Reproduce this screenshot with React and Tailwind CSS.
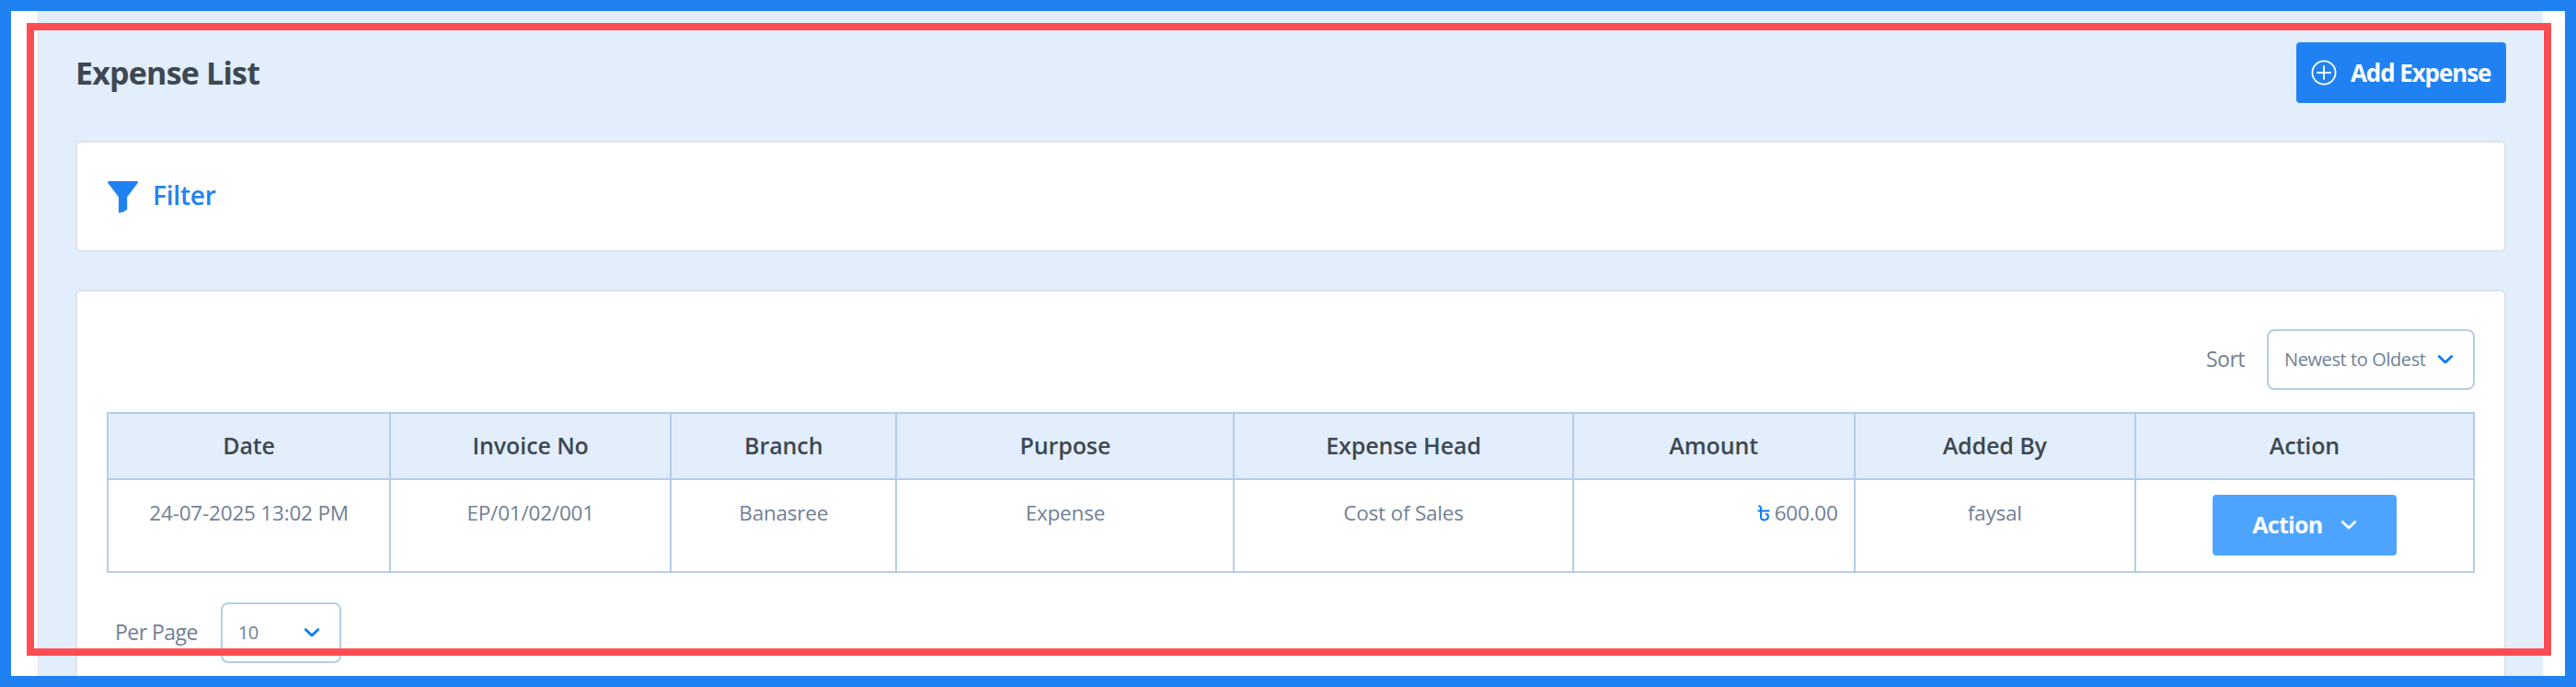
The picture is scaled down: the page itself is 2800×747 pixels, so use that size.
const columns = [
  { label: "Date", value: "24-07-2025 13:02 PM", width: "w-[307px]" },
  { label: "Invoice No", value: "EP/01/02/001", width: "w-[305px]" },
  { label: "Branch", value: "Banasree", width: "w-[245px]" },
  { label: "Purpose", value: "Expense", width: "w-[367px]" },
  { label: "Expense Head", value: "Cost of Sales", width: "w-[368px]" },
  { label: "Amount", value: "600.00", width: "w-[306px]" },
  { label: "Added By", value: "faysal", width: "w-[305px]" },
  { label: "Action", value: "", width: "w-[368px]" },
];

function Chevron({ className }) {
  return (
    <svg viewBox="0 0 18 12" className={`w-[18px] h-3 shrink-0 ${className}`} fill="none">
      <path d="M2.2 2.5 L9 9 L15.8 2.5" stroke="currentColor" strokeWidth="2.8" strokeLinecap="round" strokeLinejoin="round" />
    </svg>
  );
}

function Funnel() {
  return (
    <svg viewBox="0 0 33 35" className="w-[33px] h-[35px] mt-px shrink-0" fill="currentColor">
      <path d="M0.3 0 H32.7 V2 L21.2 17.2 V30.8 L17 33.6 L12 34.6 V17.2 L0.3 2 Z" />
    </svg>
  );
}

function Taka() {
  return (
    <svg viewBox="0 0 14 18" className="w-3.5 h-[18px] shrink-0 text-[#0b7bf8]" fill="none">
      <path
        d="M1.4 1.4 C3.2 1.2 4 2.2 4 4 V13 C4 15.4 5.2 16.4 7.4 16.4 C10.4 16.4 11.9 14.6 11.9 12.2 C11.9 10.4 10.8 9.8 9 9.9 M0.6 6.6 H13.4"
        stroke="currentColor"
        strokeWidth="2"
      />
    </svg>
  );
}

function Header() {
  return (
    <div className="flex items-start justify-between pt-[34px] h-[141px]">
      <h1 className="text-[34px] leading-[66px] font-bold tracking-[-0.8px] text-[#3d4852]">Expense List</h1>
      <button className="flex items-center w-[228px] h-[66px] pl-4 gap-[15px] rounded bg-[#2082f2] text-white text-[26px] font-bold tracking-[-1.1px] whitespace-nowrap">
        <svg viewBox="0 0 28 28" className="w-7 h-7 shrink-0" fill="none" stroke="currentColor" strokeWidth="1.8">
          <circle cx="14" cy="14" r="12.6" />
          <path d="M14 6.2 V21.8 M6.2 14 H21.8" />
        </svg>
        Add Expense
      </button>
    </div>
  );
}

function App() {
  return (
    <div className="relative w-[2800px] h-[747px] overflow-hidden border-12 border-[#2082f2] bg-white font-['Open_Sans',sans-serif] text-[#718096]">
      <div className="ml-[29px] w-[2723px] h-[723px] overflow-hidden border-l border-[#e5e5e5] bg-[#e2eefc] px-10">
        <Header />

        {/* Filter */}
        <div className="flex items-center h-[121px] pl-[33px] rounded-md border-2 border-[#dfe2e6] bg-white text-[#2082f2]">
          <Funnel />
          <span className="ml-4 -mt-[3px] text-[28px] font-semibold tracking-[-0.2px]">Filter</span>
        </div>

        {/* Expense table */}
        <div className="mt-[41px] h-[480px] pl-8 pt-[41px] rounded-md border-2 border-[#dfe2e6] bg-white">
          <div className="flex items-center justify-end gap-6 w-[2574px] h-[66px] text-[23px]">
            <span className="-mt-0.5 tracking-[-0.5px]">Sort</span>
            <div className="flex items-center justify-between w-[226px] h-[66px] pl-[17px] pr-[21px] rounded-lg border-2 border-[#b5cce7] text-[20px] tracking-[-0.4px] whitespace-nowrap">
              Newest to Oldest
              <Chevron className="text-[#0b7bf8]" />
            </div>
          </div>

          <table className="mt-6 w-[2574px] table-fixed border-collapse text-center">
            <thead>
              <tr className="h-[72px] bg-[#e2eefc] text-[25px] text-[#3d4852]">
                {columns.map((col) => (
                  <th key={col.label} className={`${col.width} border-2 border-[#b5cce7] font-semibold tracking-[-0.1px]`}>
                    {col.label}
                  </th>
                ))}
              </tr>
            </thead>
            <tbody>
              <tr className="h-[101px] text-[22.5px] tracking-[-0.2px]">
                {columns.map((col) => (
                  <td key={col.label} className="border-2 border-[#b5cce7] px-[17px] pt-4 align-top">
                    {col.label === "Action" ? (
                      <button className="flex items-center justify-center gap-[19px] mx-auto w-[200px] h-[66px] rounded-sm bg-[#4ca4ff] text-[25px] font-bold tracking-[-0.7px] text-white">
                        Action
                        <Chevron className="text-white" />
                      </button>
                    ) : col.label === "Amount" ? (
                      <div className="flex items-center justify-end gap-[5px] leading-10">
                        <Taka />
                        {col.value}
                      </div>
                    ) : (
                      <div className="leading-10">{col.value}</div>
                    )}
                  </td>
                ))}
              </tr>
            </tbody>
          </table>

          <div className="flex items-center gap-[25px] mt-8 pl-[9px] text-[23px]">
            <span className="-mt-0.5 tracking-[-0.55px]">Per Page</span>
            <div className="flex items-center justify-between w-[131px] h-[66px] pl-[17px] pr-[21px] rounded-lg border-2 border-[#b5cce7] text-[20px] tracking-[-0.4px]">
              10
              <Chevron className="text-[#0b7bf8]" />
            </div>
          </div>
        </div>
      </div>

      {/* Highlight outline over the page */}
      <div className="absolute left-[17px] top-[13px] w-[2744px] h-[688px] border-8 border-[#ff4d52] pointer-events-none" />
    </div>
  );
}

export default App;
